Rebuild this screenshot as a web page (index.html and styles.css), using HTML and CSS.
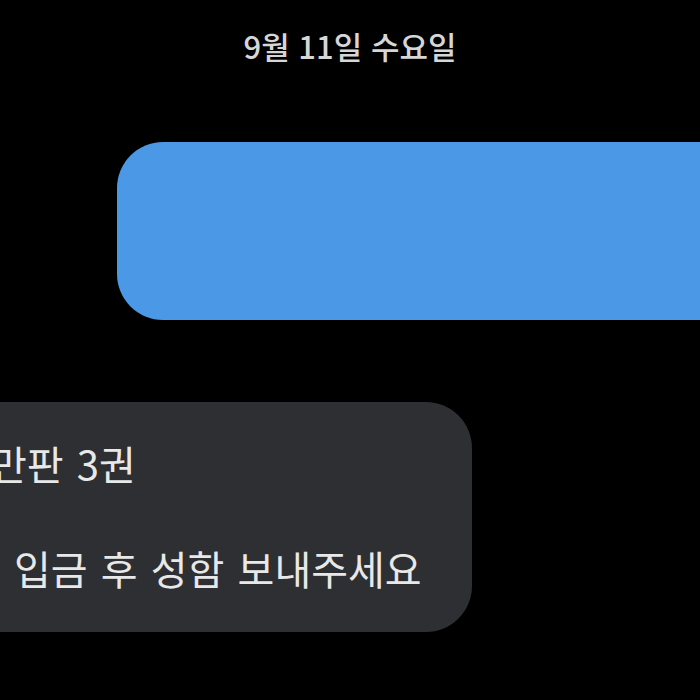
FILE: index.html
```html
<!DOCTYPE html>
<html lang="ko">

<head>
    <meta charset="UTF-8">
    <meta name="viewport" content="width=device-width, initial-scale=1.0">
    <title>메시지</title>
    <link rel="stylesheet" href="styles.css">
</head>

<body>

    <!-- 날짜 구분선 -->
    <div class="date-bar">9월 11일 수요일</div>

    <!-- 보낸 메시지 (가려진 내용) -->
    <div class="row row-out">
        <div class="bubble bubble-out"></div>
    </div>

    <!-- 받은 메시지 -->
    <div class="row row-in">
        <div class="bubble bubble-in">
            <p class="line">만판 3권</p>
            <p class="line line-shift">로 입금 후 성함 보내주세요</p>
        </div>
    </div>

</body>

</html>
```

FILE: styles.css
```css
/* 기본 */
html,
body {
    margin: 0;
    padding: 0;
    width: 100%;
    height: 100%;
    overflow: hidden;
    background-color: #000;
}

body {
    font-family: "Noto Sans CJK KR", "Noto Sans", sans-serif;
    display: flex;
    flex-direction: column;
}

/* 날짜 */
.date-bar {
    text-align: center;
    color: #d6d6d6;
    font-size: 31px;
    font-weight: 500;
    line-height: 40px;
    padding-top: 26px;
}

/* 말풍선 줄 */
.row {
    display: flex;
}

.row-out {
    justify-content: flex-end;
    margin-top: 76px;
}

.row-in {
    justify-content: flex-start;
    margin-top: 82px;
}

.bubble {
    box-sizing: border-box;
    border-radius: 46px;
}

.bubble-out {
    width: 640px;
    height: 178px;
    margin-right: -57px;
    background-color: #4b98e6;
}

.bubble-in {
    width: 532px;
    height: 230px;
    margin-left: -60px;
    padding: 35px 0 0 50px;
    background-color: #2d2f32;
    color: #e8e8e8;
    font-size: 40px;
    line-height: 52px;
    word-spacing: 2px;
    white-space: nowrap;
}

.line {
    margin: 0;
}

.line + .line {
    margin-top: 53px;
}

.line-shift {
    margin-left: -26px;
}
```
